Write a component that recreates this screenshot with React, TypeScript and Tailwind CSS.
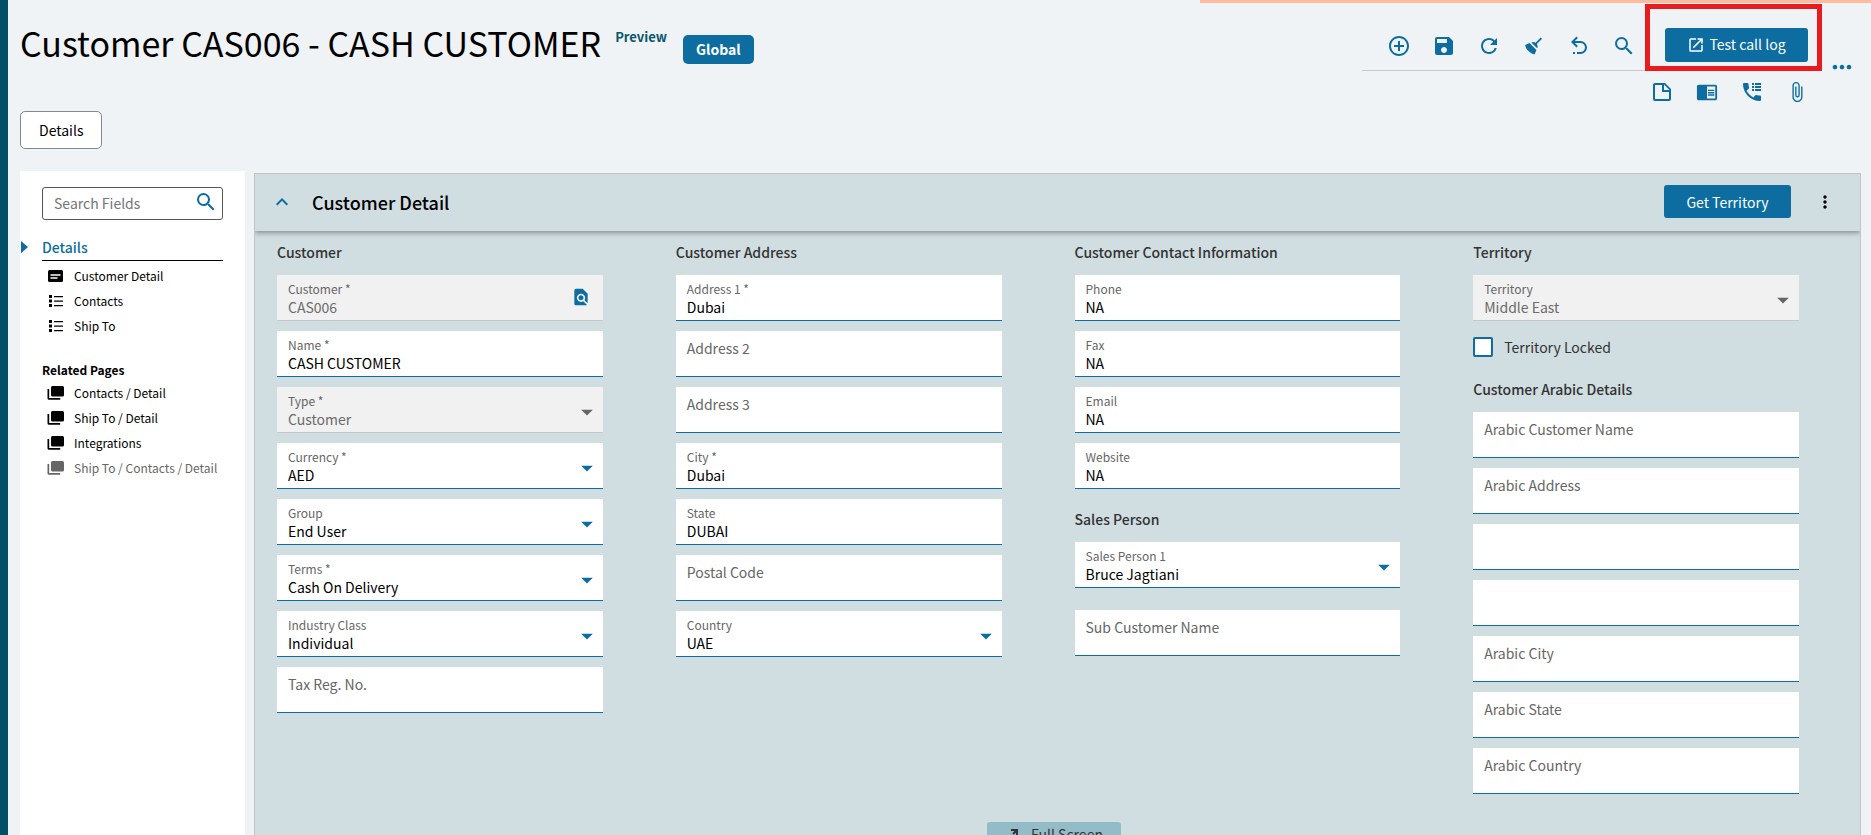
import type { ReactNode } from "react";
import {
  MdAddCircleOutline,
  MdArrowDropDown,
  MdAttachFile,
  MdChromeReaderMode,
  MdFindInPage,
  MdKeyboardArrowUp,
  MdMoreHoriz,
  MdMoreVert,
  MdOpenInNew,
  MdRefresh,
  MdSave,
  MdSearch,
} from "react-icons/md";

interface FieldProps {
  label: string;
  value?: string;
  type?: "text" | "select";
  disabled?: boolean;
  lookup?: boolean;
}

const BroomIcon = () => (
  <svg viewBox="0 0 24 24" className="size-[22px]" fill="currentColor">
    <path d="M19.36 2.72l1.42 1.42-5.72 5.71c1.07 1.54 1.22 3.39.32 4.59L9.06 8.12c1.2-.9 3.05-.75 4.59.32l5.71-5.72M5.93 17.57c-2.01-2.01-3.24-4.41-3.58-6.65l4.88-2.09 7.44 7.44-2.09 4.88c-2.24-.34-4.64-1.57-6.65-3.58z" />
  </svg>
);

const UndoIcon = () => (
  <svg viewBox="0 0 24 24" className="size-6 shrink-0" fill="currentColor">
    <path d="M13.5 7a6.5 6.5 0 0 1 0 13H10v-2h3.5c2.5 0 4.5-2 4.5-4.5S16 9 13.5 9H7.83l3.08 3.09L9.5 13.5 4 8l5.5-5.5 1.42 1.41L7.83 7h5.67M6 18h2v2H6v-2z" />
  </svg>
);

const NoteIcon = () => (
  <svg viewBox="0 0 24 24" className="size-6 shrink-0" fill="currentColor">
    <path d="M14 10h5.5L14 4.5V10M5 3h10l6 6v10a2 2 0 0 1-2 2H5a2 2 0 0 1-2-2V5c0-1.11.89-2 2-2m0 2v14h14v-7h-7V5H5z" />
  </svg>
);

const PhoneLogIcon = () => (
  <svg viewBox="0 0 24 24" className="size-6 shrink-0" fill="currentColor">
    <path d="M20 15.5a1 1 0 0 1 1 1V20a1 1 0 0 1-1 1A17 17 0 0 1 3 4a1 1 0 0 1 1-1h3.5a1 1 0 0 1 1 1c0 1.24.2 2.45.57 3.57.11.35.03.74-.25 1.02l-2.2 2.2c1.44 2.83 3.76 5.14 6.59 6.59l2.2-2.2c.28-.28.67-.36 1.02-.25 1.12.37 2.32.57 3.57.57M12 3h2v2h-2V3m3 0h6v2h-6V3m-3 3h2v2h-2V6m3 0h6v2h-6V6m-3 3h2v2h-2V9m3 0h6v2h-6V9z" />
  </svg>
);

const CardIcon = () => (
  <svg viewBox="0 0 16 14" className="h-[14px] w-4">
    <rect x="0" y="1" width="15" height="12" rx="1.5" fill="currentColor" />
    <path d="M2.5 6h10M2.5 9h7" stroke="white" strokeWidth="1.4" />
  </svg>
);

const ListIcon = () => (
  <svg viewBox="0 0 16 14" className="h-[14px] w-4" fill="currentColor">
    <path d="M1 1h3v3H1zM1 5.5h3v3H1zM1 10h3v3H1zM6 2h9v1.3H6zM6 6.5h9v1.3H6zM6 11h9v1.3H6z" />
  </svg>
);

const PagesIcon = () => (
  <svg viewBox="0 0 18 14" className="-ml-px h-[14px] w-[18px]" fill="currentColor">
    <rect x="4" y="0" width="13" height="10.5" rx="1.5" />
    <path d="M0.5 3h1.7v9h11v1.7H2a1.5 1.5 0 0 1-1.5-1.5z" />
  </svg>
);

function IconButton({ label, children }: { label: string; children: ReactNode }) {
  return (
    <button type="button" aria-label={label} className="flex size-[22px] items-center justify-center">
      {children}
    </button>
  );
}

function Field({ label, value = "", type = "text", disabled = false, lookup = false }: FieldProps) {
  const floating = value !== "";
  const control = `w-full appearance-none bg-transparent p-0 text-sm leading-5 outline-none ${
    disabled ? "text-[#6b6b6b] opacity-100" : "text-black"
  }`;

  return (
    <div
      className={`relative h-[46px] border-b ${
        disabled ? "border-[#c4c8ca] bg-[#f1f1f1]" : "border-[#0d6da1] bg-white"
      }`}
    >
      <label className="flex h-full flex-col px-[11px] pt-[6px]">
        <span
          className={
            floating
              ? "h-4 text-xs leading-4 text-[#666]"
              : "h-[22px] text-sm leading-[22px] text-[#666]"
          }
        >
          {label}
        </span>
        {type === "select" ? (
          <select className={control} defaultValue={value} disabled={disabled}>
            <option value={value}>{value}</option>
          </select>
        ) : (
          <input className={control} defaultValue={value} disabled={disabled} />
        )}
      </label>
      {type === "select" && (
        <MdArrowDropDown
          className={`pointer-events-none absolute top-[11px] right-[2px] size-7 ${
            disabled ? "text-[#666]" : "text-[#0d6da1]"
          }`}
        />
      )}
      {lookup && (
        <button
          type="button"
          aria-label="Find customer"
          className="absolute top-3 right-3 text-[#0d6da1]"
        >
          <MdFindInPage className="size-5" />
        </button>
      )}
    </div>
  );
}

function FieldGroup({ title, fields }: { title: string; fields: FieldProps[] }) {
  return (
    <section>
      <h3 className="text-sm leading-5 font-medium text-[#333]">{title}</h3>
      <div className="mt-[13px] flex flex-col gap-[10px]">
        {fields.map((field, index) => (
          <Field key={index} {...field} />
        ))}
      </div>
    </section>
  );
}

const customerFields: FieldProps[] = [
  { label: "Customer *", value: "CAS006", disabled: true, lookup: true },
  { label: "Name *", value: "CASH CUSTOMER" },
  { label: "Type *", value: "Customer", type: "select", disabled: true },
  { label: "Currency *", value: "AED", type: "select" },
  { label: "Group", value: "End User", type: "select" },
  { label: "Terms *", value: "Cash On Delivery", type: "select" },
  { label: "Industry Class", value: "Individual", type: "select" },
  { label: "Tax Reg. No." },
];

const addressFields: FieldProps[] = [
  { label: "Address 1 *", value: "Dubai" },
  { label: "Address 2" },
  { label: "Address 3" },
  { label: "City *", value: "Dubai" },
  { label: "State", value: "DUBAI" },
  { label: "Postal Code" },
  { label: "Country", value: "UAE", type: "select" },
];

const contactFields: FieldProps[] = [
  { label: "Phone", value: "NA" },
  { label: "Fax", value: "NA" },
  { label: "Email", value: "NA" },
  { label: "Website", value: "NA" },
];

const arabicFields: FieldProps[] = [
  { label: "Arabic Customer Name" },
  { label: "Arabic Address" },
  { label: "" },
  { label: "" },
  { label: "Arabic City" },
  { label: "Arabic State" },
  { label: "Arabic Country" },
];

const detailLinks = [
  { label: "Customer Detail", icon: <CardIcon /> },
  { label: "Contacts", icon: <ListIcon /> },
  { label: "Ship To", icon: <ListIcon /> },
];

const relatedLinks = [
  { label: "Contacts / Detail", muted: false },
  { label: "Ship To / Detail", muted: false },
  { label: "Integrations", muted: false },
  { label: "Ship To / Contacts / Detail", muted: true },
];

function Header() {
  return (
    <header className="flex h-[168px] items-start justify-between">
      <div>
        <div className="flex items-start pt-4">
          <h1 className="text-[34px] leading-[48px]">Customer CAS006 - CASH CUSTOMER</h1>
          <span className="mt-2 ml-[14px] text-[13px] leading-5 font-bold text-[#0b566b]">Preview</span>
          <span className="mt-4 ml-4 rounded-[5px] bg-[#0d6da1] px-[13px] text-sm leading-[29px] font-bold text-white">
            Global
          </span>
        </div>
        <button
          type="button"
          className="mt-11 h-[38px] rounded-[5px] border border-[#888] bg-white px-[18px] text-sm"
        >
          Details
        </button>
      </div>

      <div className="flex pr-[5px] text-[#0d6da1]">
        <div>
          <div className="flex items-end border-b border-[#c8c8c8] pl-[26px]">
            <div className="flex gap-[23px] pb-[13px]">
              <IconButton label="New">
                <MdAddCircleOutline className="size-6 shrink-0" />
              </IconButton>
              <IconButton label="Save">
                <MdSave className="size-6 shrink-0" />
              </IconButton>
              <IconButton label="Refresh">
                <MdRefresh className="size-6 shrink-0" />
              </IconButton>
              <IconButton label="Clear">
                <BroomIcon />
              </IconButton>
              <IconButton label="Undo">
                <UndoIcon />
              </IconButton>
              <IconButton label="Search">
                <MdSearch className="size-6 shrink-0" />
              </IconButton>
            </div>
            {/* Highlighted action */}
            <div className="mt-px -mb-px ml-[10px] border-5 border-[#e81c1e] pt-[19px] pr-[9px] pb-1 pl-[15px]">
              <button
                type="button"
                className="flex h-[34px] w-[143px] items-center justify-center gap-1 rounded-[3px] bg-[#0d6da1] pb-[2px] text-sm text-white"
              >
                <MdOpenInNew className="mt-[2px] size-[18px]" />
                Test call log
              </button>
            </div>
          </div>
          <div className="mt-[10px] flex justify-end gap-[23px] pr-[14px]">
            <IconButton label="Notes">
              <NoteIcon />
            </IconButton>
            <IconButton label="Reader">
              <MdChromeReaderMode className="size-[22px]" />
            </IconButton>
            <IconButton label="Call log">
              <PhoneLogIcon />
            </IconButton>
            <IconButton label="Attachments">
              <MdAttachFile className="size-[22px]" />
            </IconButton>
          </div>
        </div>
        <button type="button" aria-label="More" className="mt-[50px] ml-[6px] size-7">
          <MdMoreHoriz className="size-7" />
        </button>
      </div>
    </header>
  );
}

function Sidebar() {
  return (
    <aside className="w-[225px] shrink-0 bg-white pt-4 pr-[22px]">
      <div className="relative ml-[22px]">
        <input
          type="search"
          aria-label="Search Fields"
          placeholder="Search Fields"
          className="h-[33px] w-full rounded-[3px] border border-[#555] pr-9 pb-px pl-[11px] text-sm outline-none placeholder:text-[#757575]"
        />
        <MdSearch className="absolute top-[3px] right-[5px] size-6 text-[#0d6da1]" />
      </div>

      <div className="mt-[17px] flex items-center">
        <svg viewBox="0 0 8 14" className="ml-px h-[14px] w-[7px] text-[#0d6da1]" fill="currentColor">
          <path d="M0 0l8 7-8 7z" />
        </svg>
        <h2 className="ml-[14px] text-sm leading-5 font-medium text-[#0d6da1]">Details</h2>
      </div>
      <ul className="mt-[3px] ml-[22px] border-t border-black pt-[2px]">
        {detailLinks.map((link) => (
          <li key={link.label}>
            <a href="#" className="flex h-[25px] items-center gap-[10px] pl-[6px] text-xs">
              {link.icon}
              {link.label}
            </a>
          </li>
        ))}
      </ul>

      <h2 className="mt-[22px] ml-[22px] text-xs leading-5 font-bold">Related Pages</h2>
      <ul className="ml-[22px]">
        {relatedLinks.map((link) => (
          <li key={link.label}>
            <a
              href="#"
              className={`flex h-[25px] items-center gap-[9px] pl-[6px] text-xs whitespace-nowrap ${
                link.muted ? "text-[#666]" : "text-black"
              }`}
            >
              <PagesIcon />
              {link.label}
            </a>
          </li>
        ))}
      </ul>
    </aside>
  );
}

export default function App() {
  return (
    <div className="flex h-screen overflow-hidden bg-[#eff3f6] font-['Noto_Sans_CJK_SC','Noto_Sans',sans-serif] text-black">
      <div className="w-2 shrink-0 bg-[#035064]" />
      <div className="flex min-w-0 flex-1 flex-col">
        <div className="ml-auto h-[3px] w-[36%] shrink-0 bg-[#ffbba0]" />
        <div className="flex min-h-0 flex-1 flex-col pr-[10px] pl-3">
          <Header />
          <div className="flex min-h-0 flex-1 gap-[9px]">
            <Sidebar />
            <main className="mt-[2px] min-w-0 flex-1 overflow-hidden border border-b-0 border-[#c4c4c4] bg-[#d0dde1]">
              <div className="flex h-[57px] items-center pr-[25px] pb-[2px] pl-[15px] shadow-[0_2px_5px_rgba(0,0,0,0.35)]">
                <button type="button" aria-label="Collapse" className="text-[#0d6da1]">
                  <MdKeyboardArrowUp className="size-6" />
                </button>
                <h2 className="ml-[18px] text-lg font-medium">Customer Detail</h2>
                <button
                  type="button"
                  className="ml-auto h-[33px] w-[127px] rounded-[3px] bg-[#0d6da1] text-sm text-white"
                >
                  Get Territory
                </button>
                <button type="button" aria-label="Panel options" className="ml-6">
                  <MdMoreVert className="size-5" />
                </button>
              </div>

              <div className="grid grid-cols-4 gap-x-[73px] pt-[11px] pr-[61px] pl-[22px]">
                <FieldGroup title="Customer" fields={customerFields} />
                <FieldGroup title="Customer Address" fields={addressFields} />
                <div>
                  <FieldGroup title="Customer Contact Information" fields={contactFields} />
                  <div className="mt-5">
                    <FieldGroup
                      title="Sales Person"
                      fields={[{ label: "Sales Person 1", value: "Bruce Jagtiani", type: "select" }]}
                    />
                  </div>
                  <div className="mt-[22px]">
                    <Field label="Sub Customer Name" />
                  </div>
                </div>
                <div>
                  <FieldGroup
                    title="Territory"
                    fields={[
                      { label: "Territory", value: "Middle East", type: "select", disabled: true },
                    ]}
                  />
                  <label className="mt-4 flex h-5 items-center gap-[11px] text-sm text-[#333]">
                    <input
                      type="checkbox"
                      className="size-5 appearance-none rounded-[2px] border-2 border-[#0d6da1] bg-white"
                    />
                    Territory Locked
                  </label>
                  <div className="mt-[22px]">
                    <FieldGroup title="Customer Arabic Details" fields={arabicFields} />
                  </div>
                </div>
              </div>

              <div className="mt-7 flex justify-center pr-[7px]">
                <button
                  type="button"
                  className="flex h-[34px] w-[134px] items-start justify-center gap-3 rounded-[3px] bg-[#93bcc8] pt-[2px] text-sm text-[#333]"
                >
                  <svg viewBox="0 0 14 14" className="mt-[5px] size-[14px]" fill="none" stroke="currentColor" strokeWidth="2">
                    <path d="M6 1h6v6M12 1L8 5M7 13H1V7M1 13l5-5" />
                  </svg>
                  Full Screen
                </button>
              </div>
            </main>
          </div>
        </div>
      </div>
    </div>
  );
}
